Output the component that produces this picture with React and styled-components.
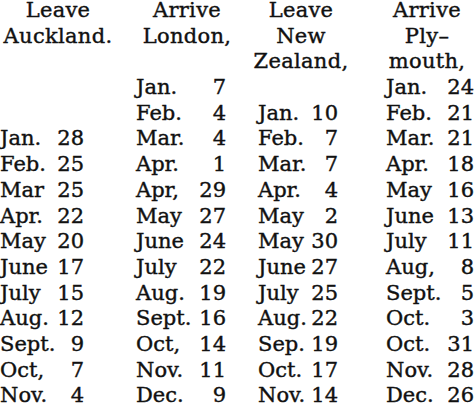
import React from 'react';
import styled, { createGlobalStyle } from 'styled-components';

const Global = createGlobalStyle`
  html, body {
    margin: 0;
    padding: 0;
    background: #fff;
  }
  body {
    width: 474px;
    height: 406px;
    overflow: hidden;
  }
`;

const Sheet = styled.div`
  width: 474px;
  height: 406px;
  overflow: hidden;
  background: #fff;
  color: #111;
  font-family: 'DejaVu Serif', 'Liberation Serif', serif;
  font-size: 21px;
  line-height: 25.7px;
  -webkit-text-stroke: 0.4px #111;
`;

const Table = styled.div`
  display: grid;
  grid-template-columns: 130px 116px 128px 100px;
  margin-top: -2px;
`;

const Head = styled.div`
  text-align: center;
  white-space: nowrap;
  height: ${25.7 * 3}px;
  letter-spacing: 0.3px;
  transform: translateX(${(p) => p.$shift}px);
`;

const DateCell = styled.div`
  display: flex;
  justify-content: space-between;
  white-space: nowrap;
  height: 25.7px;
  padding-left: ${(p) => p.$pl}px;
  padding-right: ${(p) => p.$pr}px;
`;

const cols = [
  { head: ['Leave', 'Auckland.'], shift: -7, pl: 0, pr: 46 },
  { head: ['Arrive', 'London,'], shift: -1, pl: 6, pr: 20 },
  { head: ['Leave', 'New', 'Zealand,'], shift: -9, pl: 12, pr: 36 },
  { head: ['Arrive', 'Ply–', 'mouth,'], shift: 3, pl: 12, pr: 0 },
];

const rows = [
  [null, ['Jan.', '7'], null, ['Jan.', '24']],
  [null, ['Feb.', '4'], ['Jan.', '10'], ['Feb.', '21']],
  [['Jan.', '28'], ['Mar.', '4'], ['Feb.', '7'], ['Mar.', '21']],
  [['Feb.', '25'], ['Apr.', '1'], ['Mar.', '7'], ['Apr.', '18']],
  [['Mar', '25'], ['Apr,', '29'], ['Apr.', '4'], ['May', '16']],
  [['Apr.', '22'], ['May', '27'], ['May', '2'], ['June', '13']],
  [['May', '20'], ['June', '24'], ['May', '30'], ['July', '11']],
  [['June', '17'], ['July', '22'], ['June', '27'], ['Aug,', '8']],
  [['July', '15'], ['Aug.', '19'], ['July', '25'], ['Sept.', '5']],
  [['Aug.', '12'], ['Sept.', '16'], ['Aug.', '22'], ['Oct.', '3']],
  [['Sept.', '9'], ['Oct,', '14'], ['Sep.', '19'], ['Oct.', '31']],
  [['Oct,', '7'], ['Nov.', '11'], ['Oct.', '17'], ['Nov.', '28']],
  [['Nov.', '4'], ['Dec.', '9'], ['Nov.', '14'], ['Dec.', '26']],
];

export default function App() {
  return (
    <Sheet>
      <Global />
      <Table>
        {cols.map((c, i) => (
          <Head key={'h' + i} $shift={c.shift}>
            {c.head.map((line, j) => (
              <div key={j}>{line}</div>
            ))}
          </Head>
        ))}
        {rows.map((row, r) =>
          row.map((cell, i) => (
            <DateCell key={r + '-' + i} $pl={cols[i].pl} $pr={cols[i].pr}>
              {cell && (
                <>
                  <span>{cell[0]}</span>
                  <span>{cell[1]}</span>
                </>
              )}
            </DateCell>
          ))
        )}
      </Table>
    </Sheet>
  );
}
